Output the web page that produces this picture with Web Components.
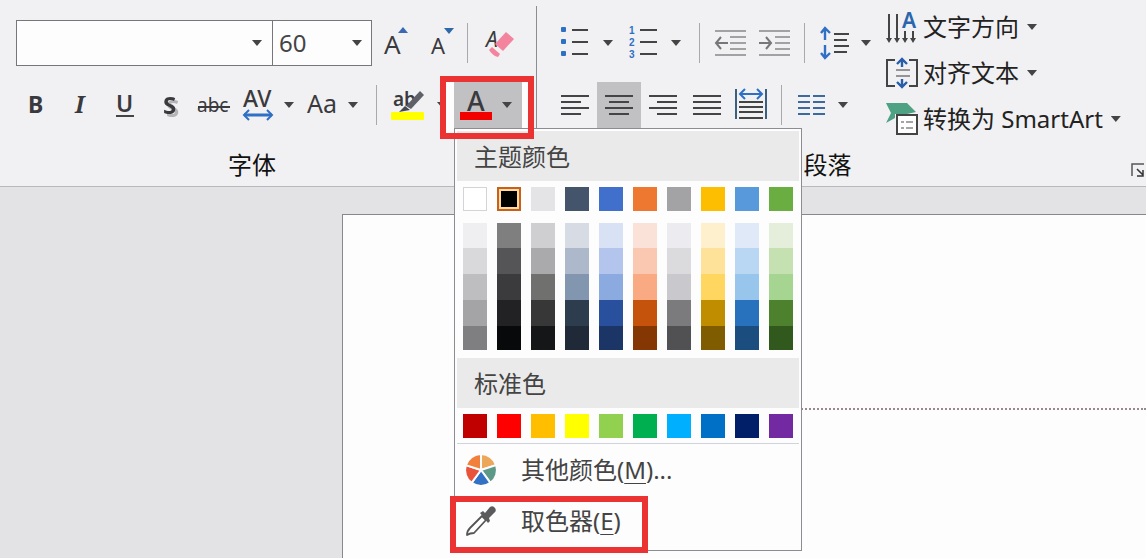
<!DOCTYPE html>
<html lang="zh-CN">
<head>
<meta charset="utf-8">
<title>字体颜色</title>
<style>
html,body{margin:0;height:100%;overflow:hidden}
body{background:#e3e3e5;color:#222;font-family:"Noto Sans","Noto Sans CJK SC",sans-serif;font-size:24px;line-height:32px}
</style>
</head>
<body>
<slide-app></slide-app>
<script>
const define=(name,css,html,setup)=>customElements.define(name,class extends HTMLElement{
  connectedCallback(){
    if(this.shadowRoot)return;
    const root=this.attachShadow({mode:'open'});
    root.innerHTML=`<style>*{box-sizing:border-box}${css}</style>${typeof html==='function'?html(this):html}`;
    if(setup)setup(this,root);
  }
});

const L=(d,c='#444',w=2)=>`<path d="${d}" fill="none" stroke="${c}" stroke-width="${w}"/>`;
const T=(x,y,s,t,extra='')=>`<text x="${x}" y="${y}" font-size="${s}" fill="#3a3a3e" ${extra}>${t}</text>`;
const BLUE='#2f6fc4';
const ICONS={
  grow:[28,32,T(2,27,26,'A')+`<path d="M16 6L21 0L26 6Z" fill="#3a68b4"/>`],
  shrink:[28,32,T(3,27,22,'A')+`<path d="M16 1H26L21 7Z" fill="#2f68a8"/>`],
  clear:[32,32,T(2,20,21,'A','font-style="italic"')+`<path d="M11 17L22 5L30 12L19 24Z" fill="#f4849d"/><path d="M8 20L16 27L14 30Q9 29 5 23Z" fill="#f4849d"/>`],
  bold:[24,32,T(4,24,23,'B','font-weight="700"')],
  italic:[24,32,T(7,24,23,'I','font-family="Noto Serif,Liberation Serif,serif" font-style="italic" font-weight="700"')],
  underline:[24,32,T(3,23,23,'U','font-weight="600"')+L('M3 27H21')],
  shadow:[26,32,T(6,25,24,'S','font-weight="700" style="filter:drop-shadow(3px 3px 0 #b5b5b7)"')],
  strike:[34,32,T(0,23,19,'abc')+L('M1 18H33','#3a3a3e')],
  spacing:[34,36,T(2,20,23,'AV','font-weight="500"')+L('M3 28H31',BLUE,3)+L('M8 23L3 28L8 33M26 23L31 28L26 33',BLUE,2)],
  casing:[34,32,T(3,24,25,'Aa')],
  highlight:[36,36,T(2,19,19,'ab','font-weight="600"')+`<path d="M15 19L29 4L33 8L20 22Z" fill="#5d6066"/><path d="M14 19L19 23L8 25Z" fill="#44474c"/><rect x="0" y="25" width="33" height="8" rx="1" fill="#ffff00"/>`],
  fontcolor:[34,36,T(8,24,27,'A','font-weight="500"')+`<rect x="1" y="25" width="32" height="8" fill="#f20000"/>`],
  bullets:[28,32,`<g fill="${BLUE}"><rect x="0" y="0" width="5" height="5" rx="1"/><rect x="0" y="12" width="5" height="5" rx="1"/><rect x="0" y="24" width="5" height="5" rx="1"/></g>`+L('M11 3H27M11 15H27M11 27H27')],
  numbers:[30,36,['1','2','3'].map((n,i)=>`<text x="1" y="${9+i*12}" font-size="10" font-family="Liberation Sans,sans-serif" font-weight="700" fill="${BLUE}">${n}</text>`).join('')+L('M12 5H29M12 17H29M12 29H29')],
  outdent:[34,28,L('M2 2H33M17 8H33M17 14H33M17 20H33M2 26H33','#888',1.5)+L('M3 14H15M8 8L3 14L8 20','#777',2)],
  indent:[34,28,L('M2 2H33M18 8H33M18 14H33M18 20H33M2 26H33','#888',1.5)+L('M2 14H14M9 8L14 14L9 20','#777',2)],
  lines:[30,34,L('M5 2V14M1 7L5 2L10 7M5 19V32M1 27L5 32L10 27',BLUE,2.4)+L('M14 8H29M14 14H27M14 20H29M14 26H27')],
  left:[28,24,L('M0 3H28M0 9H20M0 15H28M0 21H20')],
  center:[28,24,L('M0 3H28M4 9H24M0 15H28M4 21H24')],
  right:[28,24,L('M0 3H28M8 9H28M0 15H28M8 21H28')],
  justify:[28,24,L('M0 3H28M0 9H28M0 15H28M0 21H28')],
  distribute:[34,34,L('M2 1V31M32 1V31','#3b5f80')+L('M6 6H28M11 1L6 6L11 11M23 1L28 6L23 11',BLUE,2)+L('M5 14H29M5 19H29M5 24H29M5 30H29')],
  columns:[28,24,L('M0 3H12M0 9H12M0 15H12M0 21H12M15 3H27M15 9H27M15 15H27M15 21H27','#3d6a9e')],
  direction:[32,36,L('M3 5V30M11 5V30M19 22V30M27 22V30','#444',2)+`<path d="M0 29H6L3 34ZM8 29H14L11 34ZM16 29H22L19 34ZM24 29H30L27 34Z" fill="#444"/><text x="16" y="19" font-size="21" font-weight="600" fill="#2a66ae">A</text>`],
  align:[34,36,L('M10 5H2V31H10M24 5H32V31H24')+L('M11 15H25M11 21H25','#777',1.5)+L('M17 12V4M12 9L17 4L22 9M17 24V32M12 27L17 32L22 27','#285da8',2.4)],
  smartart:[34,36,`<path d="M1 2H22L31 11L22 13H10V17L1 22L6 12Z" fill="#4fa183"/><rect x="12" y="14" width="20" height="19" fill="#fff" stroke="#444" stroke-width="2"/>`+L('M16 21H19M21 21H28M16 27H19M21 27H28','#888',1.5)],
  launcher:[14,14,L('M1 13V1H13','#555',1.5)+L('M6 6L12 12M12 7V13H6','#333',1.5)],
  wheel:[32,32,`<g stroke="#fdfdfd" stroke-width="2"><path d="M16 16L16 0A16 16 0 0 1 31.200 11.100Z" fill="#eca75a"/><path d="M16 16L31.200 11.100A16 16 0 0 1 25.400 28.900Z" fill="#5c9a87"/><path d="M16 16L25.400 28.900A16 16 0 0 1 6.600 28.900Z" fill="#3272c4"/><path d="M16 16L6.600 28.900A16 16 0 0 1 .800 11.100Z" fill="#e9533a"/><path d="M16 16L.800 11.100A16 16 0 0 1 16 0Z" fill="#f0803c"/></g>`],
  picker:[32,32,`<path d="M17 11L21 15L9 28Q5 28 2 30Q2 26 5 23Z" fill="#fff" stroke="#555" stroke-width="1.800" stroke-linejoin="round"/><path d="M15 8L18 6L20 8L25 2Q28 0 30 3Q32 6 29 8L24 13L25 16L23 18Z" fill="#5b5b5d"/>`]
};

define('tool-icon',':host{display:inline-flex;flex:none}svg{display:block;overflow:visible}',
  el=>{const [w,h,body]=ICONS[el.getAttribute('name')];return `<svg width="${w}" height="${h}" viewBox="0 0 ${w} ${h}" aria-hidden="true">${body}</svg>`});

define('drop-arrow',':host{display:block;flex:none;width:10px;height:6px;background:#444;clip-path:polygon(0 0,100% 0,50% 100%)}','');

define('tool-button',`
  :host{display:block;flex:none;width:44px;height:46px}
  :host([wide]){width:46px}:host([large]){width:48px}
  :host([arrow]){width:18px}
  :host([text]){width:auto}
  button{display:flex;align-items:center;justify-content:center;width:100%;height:100%;padding:0;border:0;background:none;color:#222;font:inherit;white-space:nowrap}
  :host([pressed]) button{background:#c1c1c3}
  :host([text]) button{justify-content:flex-start;gap:4px}
  tool-icon{min-width:34px;justify-content:center}
  drop-arrow{margin:0 4px}`,
  el=>`<button type="button" aria-label="${el.getAttribute('label')||''}">${el.hasAttribute('arrow')?'<drop-arrow></drop-arrow>':`<tool-icon name="${el.getAttribute('icon')}"></tool-icon>`}<slot></slot>${el.hasAttribute('text')?'<drop-arrow></drop-arrow>':''}</button>`,
  (el,root)=>{if(el.hasAttribute('text'))root.querySelector('button').removeAttribute('aria-label')});

define('tool-separator',':host{display:block;flex:none;width:1px;height:40px;margin:0 8px;background:#a9a9ad}','');

define('combo-box',`
  :host{display:block;flex:none;width:100px;height:46px}
  :host([large]){width:256px}
  label{display:grid;height:100%;align-items:center}
  select{grid-area:1/1;width:100%;height:100%;padding:0 6px;appearance:none;border:1px solid #77777b;border-radius:0;background:#fdfdfe;color:#444;font:inherit}
  :host([large]) select{border-right:0}
  drop-arrow{grid-area:1/1;justify-self:end;margin-right:10px;pointer-events:none}`,
  el=>`<label><select aria-label="${el.getAttribute('label')}"><option>${el.getAttribute('value')||''}</option></select><drop-arrow></drop-arrow></label>`);

define('ribbon-group',`
  :host{display:flex;flex-direction:column;height:186px}
  .body{display:flex;height:148px}
  footer{display:flex;height:34px;align-items:center;color:#111}
  ::slotted([slot=label]){flex:1;text-align:center}`,
  '<div class="body"><slot></slot></div><footer><slot name="label"></slot><slot name="launcher"></slot></footer>');

define('tool-row',':host{display:flex;align-items:center;height:46px}','<slot></slot>');

define('color-swatch',`
  :host{display:block;width:24px}
  button{display:block;width:100%;height:24px;padding:0;border:0;background:var(--c)}
  :host([outline]) button{border:1px solid #d4d4d6}
  :host([selected]) button{border:2px solid #c4621c;box-shadow:inset 0 0 0 2px #ffd9a0}`,
  el=>`<button type="button" aria-label="${el.getAttribute('color')}"></button>`,
  el=>el.style.setProperty('--c',el.getAttribute('color')));

define('tint-column',`
  :host{display:grid;width:24px;grid-template-rows:25px repeat(3,26px) 24px}
  button{padding:0;border:0;background:var(--c)}`,
  el=>el.getAttribute('colors').split(' ').map(c=>`<button type="button" aria-label="#${c}" style="--c:#${c}"></button>`).join(''));

define('menu-item',`
  :host{display:block;position:relative}
  button{display:flex;align-items:center;gap:24px;width:100%;height:100%;padding:0 8px;border:0;background:none;color:#444;font:inherit;white-space:nowrap}
  u{text-decoration-thickness:1px;text-underline-offset:4px}`,
  el=>`<button type="button"><tool-icon name="${el.getAttribute('icon')}"></tool-icon><span>${el.getAttribute('label')}(<u>${el.getAttribute('key')}</u>)${el.getAttribute('tail')||''}</span></button><slot></slot>`);

const THEME=['#ffffff','#000000','#e4e4e6','#44546a','#4170cc','#ee782f','#a3a3a5','#fdbe02','#5799da','#6aae42'];
const TINTS=['efeff1 d9d9db bebec0 a4a4a6 7f7f81','7f7f7f 555557 3b3b3d 222224 08090b','cfcfd1 aaaaac 70706e 373737 151618','d6dbe4 adb9ca 8396b0 2e3d4d 1f2937','d9e1f4 b3c5ec 8aaae0 29509c 1c3567','fae2d8 fac8b0 f9aa82 c6530c 843703','ecebef dbdadd c9c9cd 7b7b7d 515153','fff0cd ffe29a ffd760 c08d00 7f5c00','dfe9f7 b9d7f2 98c5eb 2872bd 1b4d7f','e4eedb c5e1b2 a6d491 4e812e 32591d'];
const STANDARD=['#c00000','#ff0000','#ffbf00','#ffff00','#92d050','#00b050','#00b0ff','#0070c7','#001f68','#7329a2'];

define('color-menu',`
  :host{display:block;width:348px;padding:2px 2px 4px;border:1px solid #8c8c92;background:#fdfdfe;color:#444}
  h2{margin:0;padding:0 17px;height:50px;background:#eaeaeb;font:inherit;line-height:52px}
  .grid{display:flex;gap:10px;padding:6px}
  .tints{padding-bottom:8px}
  .standard{padding-bottom:5px}
  hr{margin:0;border:0;border-top:1px solid #d1d3dc}
  menu-item{height:51px}
  mark-box{position:absolute;inset:1px auto -7px -7px;width:198px}`,
  `<h2>主题颜色</h2>
   <div class="grid">${THEME.map((c,i)=>`<color-swatch color="${c}"${i===0?' outline':i===1?' selected':''}></color-swatch>`).join('')}</div>
   <div class="grid tints">${TINTS.map(c=>`<tint-column colors="${c}"></tint-column>`).join('')}</div>
   <h2>标准色</h2>
   <div class="grid standard">${STANDARD.map(c=>`<color-swatch color="${c}"></color-swatch>`).join('')}</div>
   <hr>
   <menu-item icon="wheel" label="其他颜色" key="M" tail="..."></menu-item>
   <menu-item icon="picker" label="取色器" key="E"><mark-box></mark-box></menu-item>`);

define('mark-box',':host{display:block;border:6px solid #ec3333;pointer-events:none}','');

define('color-picker',`
  :host{display:block;position:relative;z-index:2;width:68px;height:46px}
  .back{position:absolute;inset:-2px -8px -6px}
  .back{background:#fdfdfe}
  .face{display:flex;position:relative;width:100%;align-items:center;background:#c1c1c3}
  color-menu{position:absolute;top:100%;left:0}
  mark-box{position:absolute;inset:-6px -12px -11px -14px}`,
  `<div class="back"></div>
   <div class="face"><tool-button icon="fontcolor" label="字体颜色"></tool-button><tool-button arrow label="颜色选项"></tool-button></div>
   <color-menu></color-menu><mark-box></mark-box>`);

define('slide-canvas',`
  :host{display:block;flex:1;margin:27px 0 0 342px;padding-top:193px;border:1px solid #88888c;border-width:1px 0 0 1px;background:#fdfdfe}
  div{height:150px;margin-left:263px;border-top:2px dotted #98898f}`,
  '<div></div>');

define('slide-app',`
  :host{display:flex;flex-direction:column;height:100vh;min-width:1146px;overflow:hidden}
  header{display:flex;flex:none;background:#f1f1f3;border-bottom:1px solid #b9b9bd;position:relative;z-index:1}
  .font{flex:none;width:536px}
  .para{flex:1}
  .rows{display:flex;flex-direction:column;gap:16px;padding-top:20px}
  .font .rows{padding-left:14px}
  .para .rows{padding-left:14px;width:341px;flex:none}
  .para .lower{padding-left:2px}
  .rule{width:1px;height:122px;margin-top:6px;background:#8c8c92}
  .stack{padding:4px 0 0 7px}
  combo-box[large]{margin-left:2px}
  .fontname{padding-right:32px}
  .paraname{padding-right:12px}
  .end{width:16px;height:16px;margin-top:10px}
  .gap{margin-left:3px}
  .near{margin-left:2px}
  .tight{margin-left:3px}
  .pre{margin-left:14px}`,
  `<header>
    <ribbon-group class="font">
      <div class="rows">
        <tool-row>
          <combo-box large label="字体"></combo-box><combo-box label="字号" value="60"></combo-box>
          <tool-button large icon="grow" label="增大字号"></tool-button><tool-button icon="shrink" label="减小字号"></tool-button>
          <tool-separator class="tight"></tool-separator><tool-button large icon="clear" label="清除格式"></tool-button>
        </tool-row>
        <tool-row>
          <tool-button icon="bold" label="加粗"></tool-button><tool-button icon="italic" label="倾斜"></tool-button><tool-button wide icon="underline" label="下划线"></tool-button><tool-button icon="shadow" label="阴影"></tool-button><tool-button icon="strike" label="删除线"></tool-button><tool-button icon="spacing" label="字符间距"></tool-button><tool-button arrow label="间距选项"></tool-button><tool-button wide icon="casing" label="更改大小写"></tool-button><tool-button arrow label="大小写选项"></tool-button>
          <tool-separator class="pre"></tool-separator><tool-button large icon="highlight" label="突出显示"></tool-button><tool-button arrow label="突出显示选项"></tool-button>
          <color-picker class="gap"></color-picker>
        </tool-row>
      </div>
      <span slot="label" class="fontname">字体</span>
    </ribbon-group>
    <div class="rule"></div>
    <ribbon-group class="para">
      <div class="rows">
        <tool-row>
          <tool-button large icon="bullets" label="项目符号"></tool-button><tool-button arrow label="项目符号选项"></tool-button>
          <tool-button large icon="numbers" label="编号" class="near"></tool-button><tool-button arrow label="编号选项"></tool-button>
          <tool-separator class="pre"></tool-separator><tool-button icon="outdent" label="减少缩进"></tool-button><tool-button icon="indent" label="增加缩进"></tool-button>
          <tool-separator></tool-separator><tool-button icon="lines" label="行距"></tool-button><tool-button arrow label="行距选项"></tool-button>
        </tool-row>
        <tool-row class="lower">
          <tool-button icon="left" label="左对齐"></tool-button><tool-button pressed icon="center" label="居中"></tool-button><tool-button icon="right" label="右对齐"></tool-button><tool-button icon="justify" label="两端对齐"></tool-button><tool-button icon="distribute" label="分散对齐"></tool-button>
          <tool-separator></tool-separator><tool-button icon="columns" label="分栏"></tool-button><tool-button arrow label="分栏选项"></tool-button>
        </tool-row>
      </div>
      <div class="stack">
        <tool-button text icon="direction">文字方向</tool-button>
        <tool-button text icon="align">对齐文本</tool-button>
        <tool-button text icon="smartart">转换为 SmartArt</tool-button>
      </div>
      <span slot="label" class="paraname">段落</span>
      <tool-button slot="launcher" class="end" icon="launcher" label="段落设置"></tool-button>
    </ribbon-group>
  </header>
  <slide-canvas></slide-canvas>`);
</script>
</body>
</html>
